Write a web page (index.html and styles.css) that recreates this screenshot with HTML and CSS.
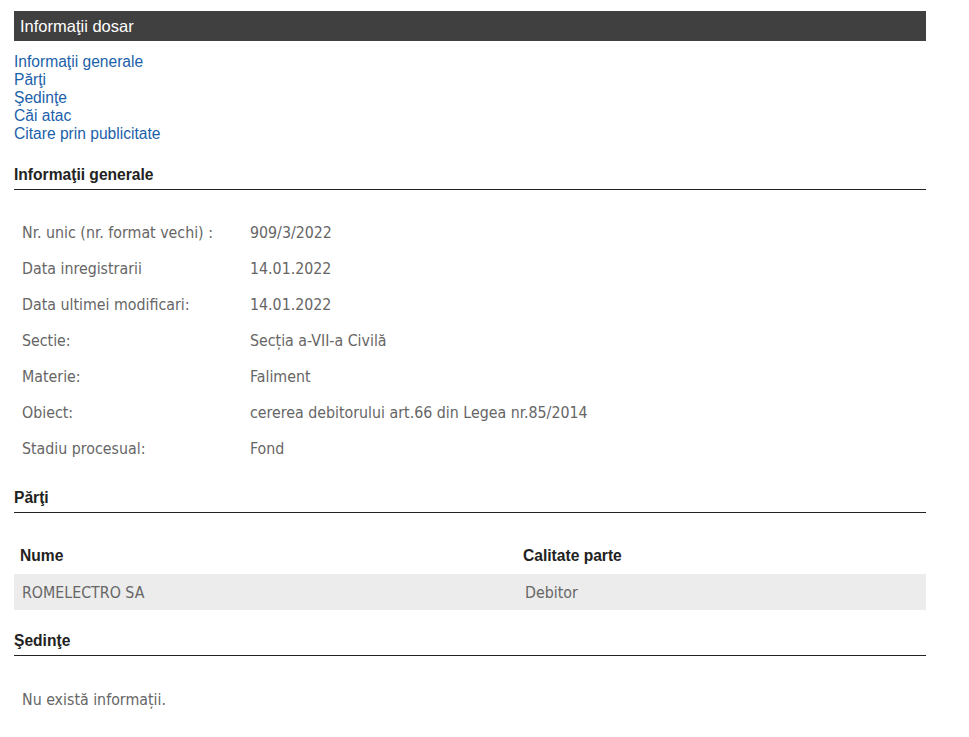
FILE: index.html
```html
<!DOCTYPE html>
<html lang="ro">
<head>
<meta charset="utf-8">
<title>Informaţii dosar</title>
<link rel="stylesheet" href="styles.css">
</head>
<body>
<div class="page">
  <div class="titlebar">Informaţii dosar</div>
  <nav class="toc">
    <a href="#gen">Informaţii generale</a>
    <a href="#parti">Părţi</a>
    <a href="#sedinte">Şedinţe</a>
    <a href="#cai">Căi atac</a>
    <a href="#citare">Citare prin publicitate</a>
  </nav>

  <h2 class="section first" id="gen">Informaţii generale</h2>
  <table class="info">
    <tr><td class="lbl">Nr. unic (nr. format vechi) :</td><td>909/3/2022</td></tr>
    <tr><td class="lbl">Data inregistrarii</td><td>14.01.2022</td></tr>
    <tr><td class="lbl">Data ultimei modificari:</td><td>14.01.2022</td></tr>
    <tr><td class="lbl">Sectie:</td><td>Secția a-VII-a Civilă</td></tr>
    <tr><td class="lbl">Materie:</td><td>Faliment</td></tr>
    <tr><td class="lbl">Obiect:</td><td>cererea debitorului art.66 din Legea nr.85/2014</td></tr>
    <tr><td class="lbl">Stadiu procesual:</td><td>Fond</td></tr>
  </table>

  <h2 class="section" id="parti">Părţi</h2>
  <table class="parties">
    <thead>
      <tr><th class="c1">Nume</th><th>Calitate parte</th></tr>
    </thead>
    <tbody>
      <tr><td>ROMELECTRO SA</td><td>Debitor</td></tr>
    </tbody>
  </table>

  <h2 class="section" id="sedinte">Şedinţe</h2>
  <p class="empty">Nu există informații.</p>
</div>
</body>
</html>
```

FILE: styles.css
```css
html, body {
  margin: 0;
  padding: 0;
  background: #fff;
}

.page {
  width: 912px;
  padding: 11px 0 0 14px;
  font-family: "Liberation Sans", Arial, sans-serif;
}

.titlebar {
  height: 30px;
  line-height: 30px;
  background: #404040;
  color: #fff;
  font-size: 16.5px;
  padding-left: 6px;
}

.toc {
  display: flex;
  flex-direction: column;
  margin-top: 12px;
}

.toc a {
  color: #1c5fa9;
  text-decoration: none;
  font-size: 15.6px;
  line-height: 18px;
}

.section {
  margin: 22px 0 0 0;
  font-size: 15.6px;
  font-weight: bold;
  color: #222;
  line-height: 18px;
  padding-bottom: 5px;
  border-bottom: 1px solid #222;
}

.section.first {
  margin-top: 23px;
}

.info {
  border-collapse: collapse;
  margin-top: 25px;
  width: 100%;
  font-family: Tahoma, "DejaVu Sans Condensed", "DejaVu Sans", sans-serif;
  font-size: 15.8px;
  color: #666;
}

.info td {
  height: 34px;
  padding: 0 0 2px 8px;
  vertical-align: middle;
}

.info td.lbl {
  width: 220px;
}

.parties {
  border-collapse: collapse;
  margin-top: 24px;
  width: 100%;
}

.parties th {
  text-align: left;
  font-size: 15.6px;
  font-weight: bold;
  color: #222;
  height: 37px;
  padding: 0 0 0 6px;
  vertical-align: middle;
}

.parties th.c1 {
  width: 497px;
}

.parties td {
  background: #ececec;
  height: 36px;
  padding: 0 0 0 8px;
  font-family: Tahoma, "DejaVu Sans Condensed", "DejaVu Sans", sans-serif;
  font-size: 15.8px;
  color: #666;
  vertical-align: middle;
}

.empty {
  margin: 35px 0 0 0;
  padding-left: 8px;
  font-family: Tahoma, "DejaVu Sans Condensed", "DejaVu Sans", sans-serif;
  font-size: 15.8px;
  color: #666;
  line-height: 18px;
}
```
